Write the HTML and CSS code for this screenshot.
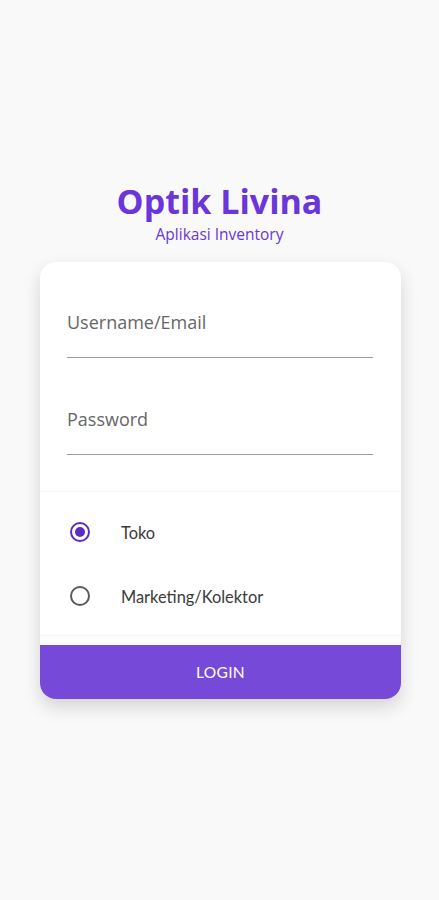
FILE: index.html
```html
<!DOCTYPE html>
<html lang="en">

<head>
     <meta charset="UTF-8">
     <meta name="viewport" content="width=device-width, initial-scale=1.0">
     <title>Optik Livina | Login</title>
     <link rel="stylesheet" href="styles.css">
</head>

<body>

     <div id="wrapper">
          <div class="brand">
               <h1 class="brand-title">Optik Livina</h1>
               <p class="brand-sub">Aplikasi Inventory</p>
          </div>

          <div class="login-card">
               <div class="fields">
                    <div class="field">
                         <span class="field-label">Username/Email</span>
                    </div>
                    <div class="field">
                         <span class="field-label">Password</span>
                    </div>
               </div>

               <div class="role-list">
                    <div class="role-item">
                         <span class="radio checked"></span>
                         <span class="role-label">Toko</span>
                    </div>
                    <div class="role-item">
                         <span class="radio"></span>
                         <span class="role-label">Marketing/Kolektor</span>
                    </div>
               </div>

               <div class="spacer"></div>
               <button class="login-btn">LOGIN</button>
          </div>
     </div>

</body>

</html>
```

FILE: styles.css
```css
* {
     padding: 0;
     margin: 0;
     box-sizing: border-box;
     font-family: 'Open Sans', sans-serif;
}

html,
body {
     width: 100%;
     height: 100%;
     background: #f9f9f9;
}

#wrapper {
     width: 100%;
     padding-top: 178px;
}

.brand {
     text-align: center;
}

.brand-title {
     font-size: 34px;
     line-height: 46px;
     font-weight: 700;
     color: #6b35d9;
}

.brand-sub {
     font-size: 15.5px;
     line-height: 20px;
     color: #6b35d9;
}

.login-card {
     margin: 18px 38px 0 40px;
     background: #fff;
     border-radius: 16px;
     overflow: hidden;
     box-shadow: 0 8px 18px rgba(0, 0, 0, .15);
}

.fields {
     padding: 0 28px 36px 27px;
}

.field {
     padding: 48px 0 23px;
     border-bottom: 1px solid #9c9c9c;
}

.field + .field {
     padding-top: 49px;
}

.field-label {
     display: block;
     font-size: 18px;
     line-height: 24px;
     color: #666;
}

.role-list {
     border-top: 1px solid #f4f4f4;
     padding: 8px 0 7px 30px;
}

.role-item {
     display: flex;
     align-items: center;
     height: 64px;
}

.radio {
     width: 20px;
     height: 20px;
     border: 2px solid #5a5a5a;
     border-radius: 50%;
     display: flex;
     align-items: center;
     justify-content: center;
}

.radio.checked {
     border-color: #5b2bc6;
}

.radio.checked::after {
     content: "";
     width: 10px;
     height: 10px;
     border-radius: 50%;
     background: #5b2bc6;
}

.role-label {
     margin-left: 31px;
     font-family: 'Lato', sans-serif;
     font-size: 16.4px;
     color: #3a3a3a;
}

.spacer {
     height: 10px;
     border-top: 1px solid #f4f4f4;
     background: #fcfcfc;
}

.login-btn {
     display: block;
     width: 100%;
     height: 54px;
     border: none;
     outline: none;
     background: #7749d9;
     color: #fff;
     font-family: 'Lato', sans-serif;
     font-size: 15.5px;
     letter-spacing: .3px;
}
```
